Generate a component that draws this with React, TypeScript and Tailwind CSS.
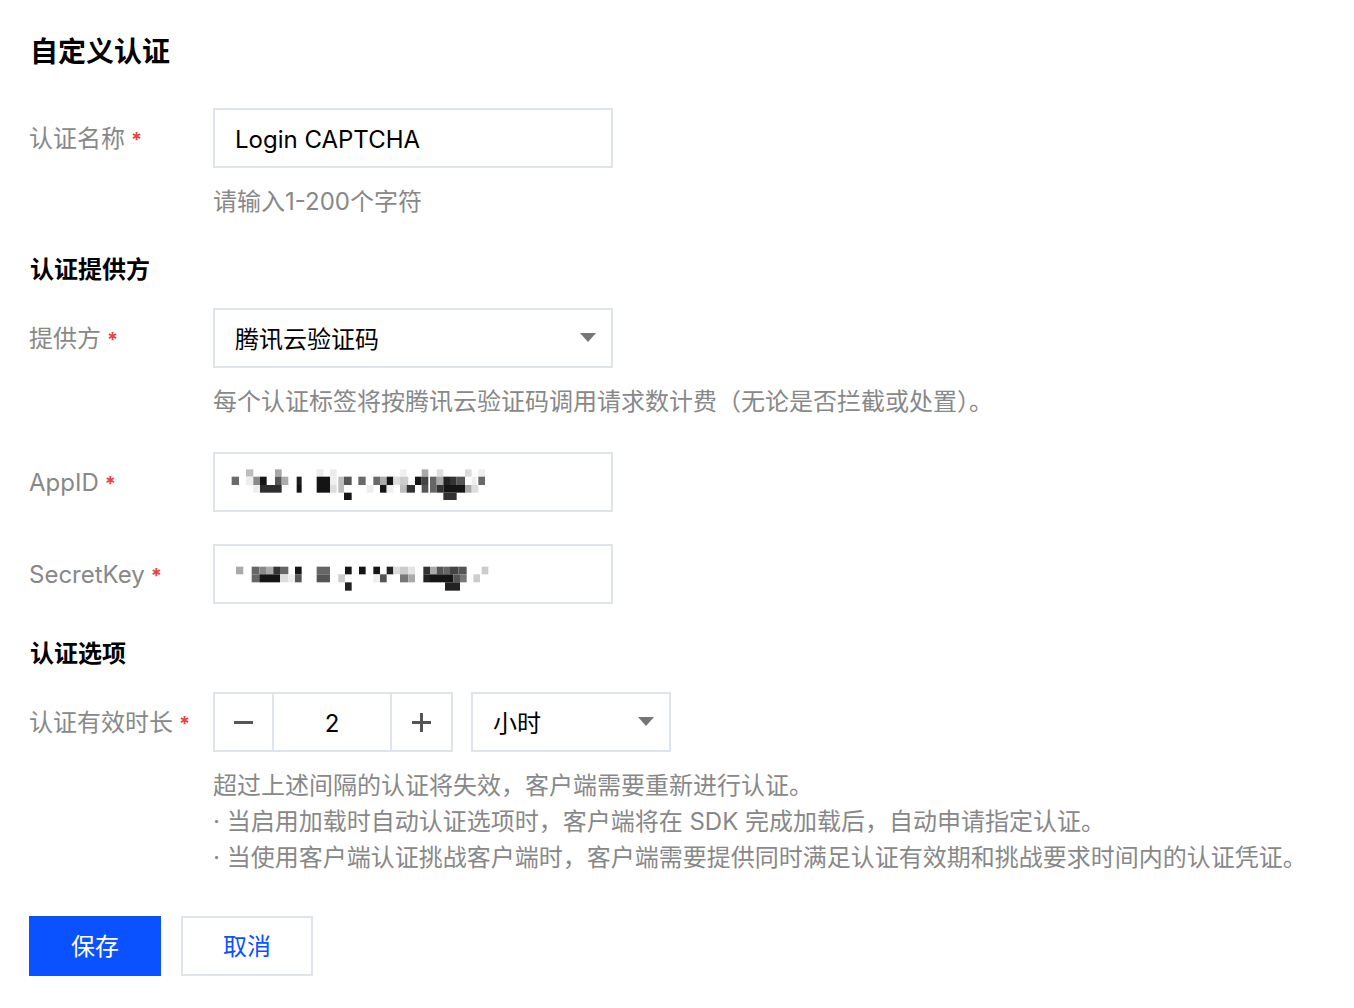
import React from 'react';

type Cell = [number, number, string];
type MosaicRow = { y1: number; y2: number; cells: Cell[] };

// blurred AppID / SecretKey values, coordinates taken from a 3x crop
const appIdRows: MosaicRow[] = [
  {
    y1: 88,
    y2: 110,
    cells: [
      [138, 160, '#bdbdbd'], [225, 245, '#a8a8a8'], [350, 370, '#ededed'], [390, 410, '#ececec'],
      [600, 620, '#f0f0f0'], [665, 685, '#a9a9a9'], [710, 730, '#dedede'], [795, 815, '#dcdcdc'],
      [835, 855, '#eeeeee'],
    ],
  },
  {
    y1: 110,
    y2: 135,
    cells: [
      [95, 117, '#6a6a6a'], [138, 160, '#eeeeee'], [160, 180, '#8a8a8a'], [180, 200, '#151515'],
      [225, 245, '#565656'], [245, 265, '#ababab'], [290, 305, '#1e1e1e'], [350, 390, '#141414'],
      [390, 410, '#eeeeee'], [415, 432, '#bdbdbd'], [432, 455, '#555555'], [475, 497, '#6a6a6a'],
      [520, 540, '#6a6a6a'], [540, 560, '#ababab'], [560, 580, '#151515'], [580, 600, '#dddddd'],
      [600, 625, '#cccccc'], [645, 665, '#151515'], [665, 685, '#444444'], [690, 710, '#666666'],
      [710, 730, '#acacac'], [730, 750, '#222222'], [750, 770, '#333333'], [770, 795, '#555555'],
      [815, 830, '#eeeeee'], [835, 855, '#686868'],
    ],
  },
  {
    y1: 135,
    y2: 158,
    cells: [
      [160, 180, '#eeeeee'], [180, 245, '#2f2f2f'], [290, 305, '#151515'], [350, 390, '#141414'],
      [390, 410, '#dddddd'], [415, 432, '#bdbdbd'], [500, 520, '#eeeeee'], [540, 560, '#151515'],
      [560, 580, '#eeeeee'], [600, 620, '#bdbdbd'], [620, 645, '#333333'], [665, 685, '#555555'],
      [690, 710, '#666666'], [710, 730, '#333333'], [730, 795, '#151515'], [795, 815, '#aaaaaa'],
      [815, 835, '#dddddd'],
    ],
  },
  {
    y1: 158,
    y2: 180,
    cells: [[432, 455, '#151515'], [730, 770, '#333333']],
  },
];

const secretRows: MosaicRow[] = [
  {
    y1: 380,
    y2: 403,
    cells: [
      [108, 130, '#aaaaaa'], [155, 178, '#666666'], [178, 200, '#888888'], [200, 220, '#aaaaaa'],
      [220, 240, '#333333'], [240, 265, '#666666'], [285, 305, '#151515'], [350, 390, '#666666'],
      [435, 455, '#151515'], [477, 497, '#151515'], [520, 540, '#151515'], [560, 580, '#222222'],
      [580, 600, '#dddddd'], [600, 625, '#cccccc'], [625, 645, '#e4e4e4'], [670, 690, '#333333'],
      [690, 710, '#aaaaaa'], [710, 730, '#555555'], [730, 750, '#666666'], [750, 775, '#444444'],
      [775, 800, '#555555'], [845, 865, '#cccccc'],
    ],
  },
  {
    y1: 403,
    y2: 427,
    cells: [
      [155, 178, '#666666'], [178, 240, '#151515'], [240, 265, '#dddddd'], [265, 285, '#eeeeee'],
      [285, 305, '#555555'], [350, 390, '#555555'], [415, 435, '#cccccc'], [520, 540, '#eeeeee'],
      [540, 560, '#555555'], [600, 625, '#777777'], [625, 645, '#aaaaaa'], [670, 690, '#222222'],
      [690, 760, '#151515'], [760, 780, '#555555'], [780, 800, '#777777'], [820, 840, '#cccccc'],
    ],
  },
  {
    y1: 427,
    y2: 452,
    cells: [[435, 455, '#222222'], [735, 780, '#222222']],
  },
];

const Mosaic = ({ rows, top }: { rows: MosaicRow[]; top: number }) => (
  <svg width={396} height={56} className="block">
    {rows.map((row, i) =>
      row.cells.map(([x1, x2, color], j) => (
        <rect
          key={`${i}-${j}`}
          x={x1 / 3 - 15}
          y={440 + row.y1 / 3 - (top + 2)}
          width={(x2 - x1) / 3}
          height={(row.y2 - row.y1) / 3}
          fill={color}
        />
      ))
    )}
  </svg>
);

const Caret = () => (
  <svg width="16" height="10" viewBox="0 0 16 10">
    <polygon points="0,0 16,0 8,9" fill="#767676" />
  </svg>
);

const Label = ({ text }: { text: string }) => (
  <div className="flex w-[184px] shrink-0 items-center pt-[2px] text-[#888888]">
    <span>{text}</span>
    <span className="ml-[6px] mt-[2px] text-[20px] font-bold text-[#e54545]">*</span>
  </div>
);

const Box = ({ children, className = '' }: { children: React.ReactNode; className?: string }) => (
  <div className={`flex h-[60px] w-[400px] items-center border-2 border-[#dfe3ea] bg-white ${className}`}>
    {children}
  </div>
);

const App = () => {
  return (
    <div className="min-h-screen bg-white pl-[29px] pt-[32px] font-['Inter','Noto_Sans_CJK_SC',sans-serif] text-[24px] leading-[36px] text-black">
      <h1 className="pl-px text-[28px] font-bold leading-[40px]">自定义认证</h1>

      <div className="mt-[36px] flex items-center">
        <Label text="认证名称" />
        <Box className="px-5 pt-[3px]">Login CAPTCHA</Box>
      </div>
      <p className="ml-[184px] mt-4 text-[#888888]">请输入1-200个字符</p>

      <h2 className="mt-8 pl-px font-bold">认证提供方</h2>

      <div className="mt-5 flex items-center">
        <Label text="提供方" />
        <Box className="justify-between pl-5 pr-[15px]">
          <span className="pt-[3px]">腾讯云验证码</span>
          <Caret />
        </Box>
      </div>
      <p className="ml-[184px] mt-4 text-[#888888]">
        每个认证标签将按腾讯云验证码调用请求数计费（无论是否拦截或处置）。
      </p>

      <div className="mt-8 flex items-center">
        <Label text="AppID" />
        <Box>
          <Mosaic rows={appIdRows} top={452} />
        </Box>
      </div>

      <div className="mt-8 flex items-center">
        <Label text="SecretKey" />
        <Box>
          <Mosaic rows={secretRows} top={544} />
        </Box>
      </div>

      <h2 className="mt-8 pl-px font-bold">认证选项</h2>

      <div className="mt-5 flex items-center">
        <Label text="认证有效时长" />
        <div className="flex h-[60px] w-[240px] border-2 border-[#dfe3ea]">
          <button className="flex w-[59px] items-center justify-center border-r-2 border-[#dfe3ea]">
            <span className="block h-[3px] w-[19px] bg-[#555555]" />
          </button>
          <div className="flex w-[118px] items-center justify-center border-r-2 border-[#dfe3ea] pt-[3px]">2</div>
          <button className="flex flex-1 items-center justify-center">
            <svg width="19" height="19" viewBox="0 0 19 19">
              <rect x="0" y="8" width="19" height="3" fill="#555555" />
              <rect x="8" y="0" width="3" height="19" fill="#555555" />
            </svg>
          </button>
        </div>
        <div className="ml-[18px] flex h-[60px] w-[200px] items-center justify-between border-2 border-[#dfe3ea] pl-5 pr-[15px]">
          <span className="pt-[3px]">小时</span>
          <Caret />
        </div>
      </div>

      <div className="ml-[184px] mt-4 text-[#888888]">
        <p>超过上述间隔的认证将失效，客户端需要重新进行认证。</p>
        <p>· 当启用加载时自动认证选项时，客户端将在 SDK 完成加载后，自动申请指定认证。</p>
        <p>· 当使用客户端认证挑战客户端时，客户端需要提供同时满足认证有效期和挑战要求时间内的认证凭证。</p>
      </div>

      <div className="mt-10 flex gap-5 pb-8">
        <button className="h-[60px] w-[132px] bg-[#0a52ff] pt-[2px] text-white">保存</button>
        <button className="h-[60px] w-[132px] border-2 border-[#dfe3ea] bg-white pt-[2px] text-[#0a52ff]">取消</button>
      </div>
    </div>
  );
};

export default App;
